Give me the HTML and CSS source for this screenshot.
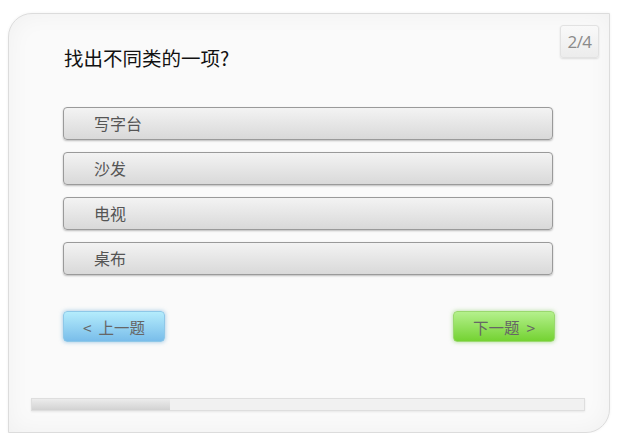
FILE: index.html
```html
<!DOCTYPE html>
<html lang="zh">
    <head>
        <meta charset="utf-8">
        <meta name="viewport" content="width=device-width, initial-scale=1">
        <title>找出不同类的一项</title>
        <link rel="stylesheet" href="styles.css">
    </head>
    <body>
        <div class="quiz">
            <span class="counter">2/4</span>
            <div class="quiz-body">
                <h1 class="question">找出不同类的一项?</h1>
                <ul class="options">
                    <li class="option">写字台</li>
                    <li class="option">沙发</li>
                    <li class="option">电视</li>
                    <li class="option">桌布</li>
                </ul>
                <div class="nav">
                    <button class="nav-btn prev">&lt;&nbsp; 上一题</button>
                    <button class="nav-btn next">下一题 &nbsp;&gt;</button>
                </div>
            </div>
            <div class="progress"><div class="progress-fill" style="width: 25%"></div></div>
        </div>
    </body>
</html>
```

FILE: styles.css
```css
body {
    margin: 0;
    background: #fff;
    font-family: "Noto Sans CJK SC", "Noto Sans", sans-serif;
}
.quiz {
    position: relative;
    box-sizing: border-box;
    display: flex;
    flex-direction: column;
    margin: 13px 0 0 8px;
    width: 602px;
    height: 420px;
    border: 1px solid #dcdcdc;
    border-radius: 24px 0 24px 0;
    background: #fafafa;
    box-shadow: inset 0 0 24px rgba(0, 0, 0, 0.045), 0 0 3px rgba(0, 0, 0, 0.06);
}
.counter {
    position: absolute;
    top: 11px;
    right: 10px;
    box-sizing: border-box;
    width: 39px;
    height: 33px;
    line-height: 31px;
    text-align: center;
    font-family: "Open Sans", "Noto Sans", sans-serif;
    font-size: 17px;
    letter-spacing: -0.5px;
    color: #8a8a8a;
    border: 1px solid #e2e2e2;
    border-radius: 3px;
    background: linear-gradient(#f9f9f9, #ececec);
    box-shadow: 0 1px 2px rgba(0, 0, 0, 0.12);
}
.quiz-body {
    padding: 32px 0 0 54px;
    width: 492px;
}
.question {
    margin: 0 0 0 1px;
    font-size: 19.5px;
    line-height: 24px;
    font-weight: normal;
    color: #111;
}
.options {
    list-style: none;
    margin: 37px 0 0;
    padding: 0;
    display: flex;
    flex-direction: column;
    gap: 12px;
}
.option {
    box-sizing: border-box;
    width: 490px;
    height: 33px;
    padding-left: 30px;
    line-height: 31px;
    font-size: 16px;
    color: #555;
    border: 1px solid #9a9a9a;
    border-radius: 4px;
    background: linear-gradient(#f3f3f3, #d9d9d9);
    box-shadow: 0 1px 2px rgba(0, 0, 0, 0.25);
}
.nav {
    display: flex;
    justify-content: space-between;
    margin-top: 36px;
}
.nav-btn {
    box-sizing: border-box;
    width: 102px;
    height: 31px;
    padding: 0;
    font-family: inherit;
    font-size: 15.5px;
    color: #666;
    border-radius: 4px;
    cursor: pointer;
}
.prev {
    border: 1px solid #8ec8e8;
    background: linear-gradient(#b4ecfc, #79bdea);
    box-shadow: 0 0 4px rgba(90, 160, 210, 0.6);
}
.next {
    border: 1px solid #9ad86e;
    background: linear-gradient(#b4f08c, #74d232);
    box-shadow: 0 0 4px rgba(120, 200, 80, 0.6);
}
.progress {
    margin: auto 24px 21px 22px;
    height: 11px;
    border: 1px solid #dedede;
    background: #f1f1f1;
    box-shadow: 0 1px 2px rgba(0, 0, 0, 0.08);
}
.progress-fill {
    height: 100%;
    background: linear-gradient(#ececec, #d2d2d2);
}
```
